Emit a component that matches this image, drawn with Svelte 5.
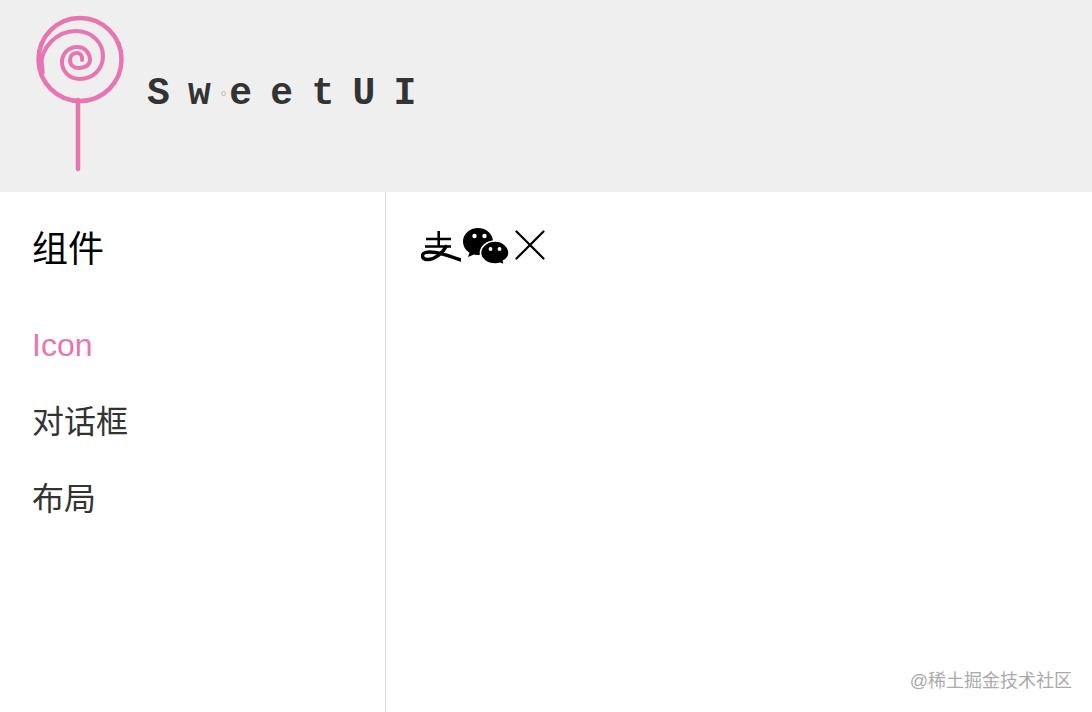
<script>
  const menu = ["Icon", "对话框", "布局"]
  let active = "Icon"
</script>

<header class="topbar">
  <svg class="lollipop" width="100" height="170" viewBox="30 10 100 170" fill="none" stroke="#e874b0" stroke-linecap="round" stroke-linejoin="round">
    <path d="M78 100 L78 169" stroke-width="4.5" />
    <circle cx="80" cy="59.5" r="41.5" stroke-width="4.5" />
    <path d="M41 66 C41 48 56 31 76 31 C92 31 103 43 103 56 C103 70 92 79 80 79 C69 79 62 71 62 62 C62 53 69 47 77 47 C85 47 90 53 90 60 C90 65 85 68 79 68 C74 68 70 65 70 60 C70 56 73 53 77 53 C80 53 83 56 82 60" stroke-width="4" />
    <path d="M40 56 L42 72" stroke-width="5.5" />
  </svg>
  <div class="brand">
    SweetUI
    <span class="speck"></span>
  </div>
</header>

<div class="body">
  <aside class="sidebar">
    <h2>组件</h2>
    <ul>
      {#each menu as item}
        <li class:active={item === active}>{item}</li>
      {/each}
    </ul>
  </aside>
  <main class="content">
    <div class="icons">
      <svg class="alipay" width="40" height="31" viewBox="0 0 40 31" fill="none" stroke="#000" aria-label="alipay">
        <path d="M5 8 H30 M17.7 0 V15 M4 15.5 H30" stroke-width="2.6" />
        <path d="M25 15.5 C22 22 13 29 6 28.5 C0.5 28 0 23 4.5 21.5 C12 19 26 24 39.5 29" stroke-width="3.4" stroke-linecap="round" />
      </svg>
      <svg class="wechat" width="46" height="37" viewBox="0 0 46 37" aria-label="wechat">
        <path d="M15 0 C6.7 0 0 6 0 13.5 C0 18.5 3 22.5 6.5 24.5 L5 29 L11 26.5 C12.5 27 14 27 15 27 C23.3 27 30 21 30 13.5 C30 6 23.3 0 15 0 Z" fill="#000" />
        <path d="M32 13 C24 13 17.5 18.5 17.5 25 C17.5 31.5 24 36 32 36 C34 36 36 35.7 37 35.3 L41.5 37 L40.5 33 C44 31 46 28.5 46 25 C46 18.5 40 13 32 13 Z" fill="#000" stroke="#fff" stroke-width="1.6" />
        <circle cx="11.5" cy="8" r="2.2" fill="#fff" />
        <circle cx="21.5" cy="8" r="2.2" fill="#fff" />
        <circle cx="27.5" cy="21" r="1.9" fill="#fff" />
        <circle cx="36.5" cy="21" r="1.9" fill="#fff" />
      </svg>
      <svg class="cross" width="30" height="30" viewBox="0 0 30 30" stroke="#000" stroke-width="2.2" stroke-linecap="round" aria-label="close">
        <path d="M1.5 1.5 L28.5 28.5 M28.5 1.5 L1.5 28.5" />
      </svg>
    </div>
  </main>
</div>

<div class="watermark">@稀土掘金技术社区</div>

<style>
  :global(body) {
    margin: 0;
    background: #fff;
    font-family: "Liberation Sans", "Noto Sans CJK SC", sans-serif;
  }
  .topbar {
    height: 192px;
    background: #efefef;
    display: flex;
    align-items: flex-start;
    padding-left: 30px;
    padding-top: 10px;
    box-sizing: border-box;
  }
  .lollipop {
    flex: none;
  }
  .brand {
    position: relative;
    margin-top: 62px;
    margin-left: 17px;
    font-family: "Liberation Mono", monospace;
    font-size: 38px;
    font-weight: 700;
    line-height: 44px;
    letter-spacing: 18.3px;
    color: #333;
  }
  .speck {
    position: absolute;
    left: 74px;
    top: 19px;
    width: 3px;
    height: 3px;
    border: 1px solid #bbb;
    border-radius: 50%;
  }
  .body {
    display: flex;
    height: 520px;
  }
  .sidebar {
    width: 386px;
    box-sizing: border-box;
    border-right: 1px solid #e0e0e0;
    padding: 33px 32px 0;
    flex: none;
  }
  h2 {
    margin: 0 0 48px;
    font-size: 36px;
    line-height: 50px;
    font-weight: 400;
    color: #000;
  }
  ul {
    list-style: none;
    margin: 0;
    padding: 0;
    display: flex;
    flex-direction: column;
    gap: 32px;
  }
  li {
    font-size: 32px;
    line-height: 45px;
    color: #333;
  }
  li.active {
    color: #e874b0;
  }
  .content {
    flex: 1;
    padding: 36px 0 0 35px;
  }
  .icons {
    display: flex;
    align-items: center;
    gap: 2px;
  }
  .cross {
    margin-left: 4px;
    margin-top: -3px;
  }
  .watermark {
    position: absolute;
    right: 20px;
    bottom: 20px;
    font-size: 18px;
    line-height: 22px;
    color: #aaa;
  }
</style>
